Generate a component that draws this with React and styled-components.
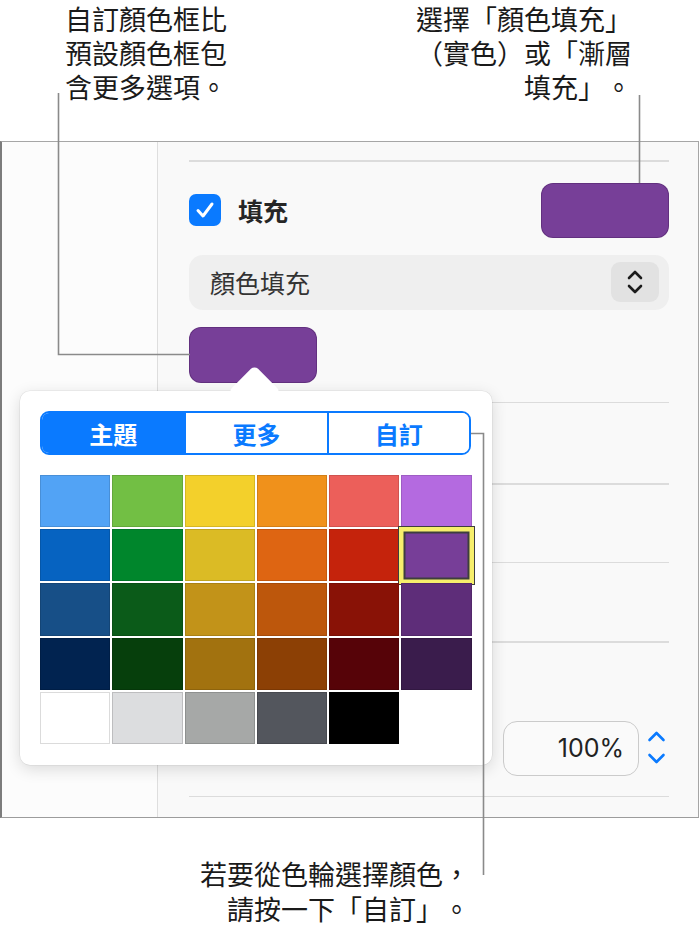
import React from 'react';
import styled, { createGlobalStyle } from 'styled-components';

const GlobalStyle = createGlobalStyle`
  * {
    box-sizing: border-box;
  }
  body {
    margin: 0;
    background: #ffffff;
    font-family: 'Noto Sans', 'Noto Sans CJK TC', sans-serif;
    color: #1a1a1a;
    text-spacing-trim: space-all;
  }
`;

const SWATCHES = [
  ['#52a3f5', '#72bf44', '#f3d02b', '#f0911b', '#ec5f5a', '#b46ae0'],
  ['#0663c1', '#00862c', '#dbbb25', '#de6512', '#c5230c', '#773e98'],
  ['#174f87', '#0b5b19', '#c29319', '#bd570c', '#891206', '#5e2d79'],
  ['#012350', '#063f0c', '#a2720f', '#8c4005', '#560308', '#3a1c4c'],
  ['#ffffff', '#dcdddf', '#a6a8a7', '#53565d', '#000000', null],
];

const Figure = styled.div`
  position: relative;
  width: 700px;
  height: 929px;
  overflow: hidden;
`;

const Header = styled.div`
  display: flex;
  justify-content: space-between;
  height: 141px;
`;

const Callout = styled.p`
  margin: 0;
  font-family: 'Noto Sans CJK TC', sans-serif;
  font-size: 27px;
  line-height: 34px;
  color: #1a1a1a;
  text-align: ${(p) => p.align || 'left'};
  text-spacing-trim: space-all;
`;

const LeftNote = styled(Callout)`
  padding: 2px 0 0 65px;
`;

const RightNote = styled(Callout)`
  padding: 2px 68px 0 0;
`;

const Panel = styled.div`
  display: grid;
  grid-template-columns: 156px 1fr;
  width: 699px;
  height: 677px;
  border-top: 1.5px solid #a6a6a6;
  border-left: 2px solid #7c7c7c;
  border-right: 1.5px solid #a6a6a6;
  border-bottom: 1.5px solid #9c9c9c;
  background: #f9f9f9;
`;

const Sidebar = styled.div`
  background: #fcfcfc;
  border-right: 1.5px solid #dedede;
`;

const Inspector = styled.div`
  display: flex;
  flex-direction: column;
  padding: 18px 29px 0 31px;
`;

const Rule = styled.div`
  height: 1.5px;
  background: #dcdcdc;
  margin-top: ${(p) => p.top || 0}px;
`;

const FillRow = styled.div`
  display: flex;
  align-items: center;
  justify-content: space-between;
  margin-top: 21px;
  height: 55px;
`;

const Label = styled.label`
  display: flex;
  align-items: center;
  gap: 17px;
  font-family: 'Noto Sans CJK TC', sans-serif;
  font-size: 25px;
  font-weight: 700;
  color: #262626;
`;

const Checkbox = styled.span`
  display: flex;
  align-items: center;
  justify-content: center;
  width: 32px;
  height: 32px;
  border-radius: 7px;
  background: #0a7aff;
`;

const ColorWell = styled.div`
  width: 128px;
  height: ${(p) => p.h || 55}px;
  border-radius: 12px;
  background: ${(p) => p.color};
  border: 1px solid rgba(60, 20, 80, 0.35);
`;

const Select = styled.div`
  display: flex;
  align-items: center;
  justify-content: space-between;
  margin-top: 17px;
  height: 55px;
  padding: 0 10px 0 21px;
  border-radius: 14px;
  background: #efefef;
  font-family: 'Noto Sans CJK TC', sans-serif;
  font-size: 25px;
  color: #333333;
`;

const StepBox = styled.span`
  display: flex;
  align-items: center;
  justify-content: center;
  width: 48px;
  height: 40px;
  border-radius: 9px;
  background: #e2e2e2;
`;

const WellRow = styled.div`
  display: flex;
  margin-top: 17px;
`;

const ValueRow = styled.div`
  display: flex;
  align-items: center;
  justify-content: flex-end;
  gap: 8px;
  margin-top: 78px;
  padding-right: 3px;
`;

const ValueField = styled.div`
  width: 136px;
  height: 55px;
  border: 1.5px solid #cbcbcb;
  border-radius: 14px;
  background: #fafafa;
  padding-right: 14px;
  text-align: right;
  font-family: 'Inter', 'Noto Sans', sans-serif;
  font-size: 25px;
  line-height: 52px;
  color: #222222;
`;

const Popover = styled.div`
  position: absolute;
  left: 20px;
  top: 391px;
  width: 472px;
  padding: 20px 20px 21px;
  background: #ffffff;
  border-radius: 10px;
  box-shadow: 0 0 0 0.5px rgba(0, 0, 0, 0.08), 0 4px 16px rgba(0, 0, 0, 0.14);
`;

const Arrow = styled.span`
  position: absolute;
  left: 216px;
  top: -18px;
  width: 37px;
  height: 37px;
  background: #ffffff;
  border-radius: 5px;
  transform: rotate(45deg);
`;

const Segmented = styled.div`
  position: relative;
  display: grid;
  grid-template-columns: repeat(3, 1fr);
  height: 44px;
  width: 431px;
  border: 2px solid #0a7aff;
  border-radius: 9px;
  overflow: hidden;
`;

const Segment = styled.div`
  display: flex;
  align-items: center;
  justify-content: center;
  font-family: 'Noto Sans CJK TC', sans-serif;
  font-size: 24px;
  font-weight: 700;
  color: ${(p) => (p.active ? '#ffffff' : '#0a7aff')};
  background: ${(p) => (p.active ? '#0a7aff' : '#ffffff')};
  & + & {
    border-left: 2px solid #0a7aff;
  }
`;

const Grid = styled.div`
  display: grid;
  grid-template-columns: repeat(6, 70.3px);
  grid-auto-rows: 52.2px;
  gap: 2px;
  margin-top: 20px;
`;

const Swatch = styled.div`
  position: relative;
  background: ${(p) => p.color};
  box-shadow: inset 0 0 0 1px ${(p) => (p.light ? 'rgba(0,0,0,0.14)' : 'rgba(0,0,0,0.12)')};

  ${(p) =>
    p.selected &&
    `
    &::after {
      content: '';
      position: absolute;
      inset: -3.5px;
      border: 1.5px solid #3e3e3e;
      box-shadow: inset 0 0 0 4.5px #f7ef6c, inset 0 0 0 6.5px #3e3e3e;
    }
  `}
`;

const Footer = styled(Callout)`
  margin-top: 38px;
  width: 470px;
  line-height: 35px;
`;

const Leaders = styled.svg`
  position: absolute;
  left: 0;
  top: 0;
  width: 700px;
  height: 929px;
  pointer-events: none;
`;

const Chevrons = ({ color, width, height, up, down, stroke }) => (
  <svg width={width} height={height} viewBox={`0 0 ${width} ${height}`}>
    <g fill="none" stroke={color} strokeWidth={stroke} strokeLinecap="round" strokeLinejoin="round">
      <polyline points={up} />
      <polyline points={down} />
    </g>
  </svg>
);

const App = () => {
  return (
    <Figure>
      <GlobalStyle />
      <Header>
        <LeftNote>
          自訂顏色框比
          <br />
          預設顏色框包
          <br />
          含更多選項。
        </LeftNote>
        <RightNote align="right">
          選擇「顏色填充」
          <br />
          （實色）或「漸層
          <br />
          填充」。
        </RightNote>
      </Header>

      <Panel>
        <Sidebar />
        <Inspector>
          <Rule />
          <FillRow>
            <Label>
              <Checkbox>
                <svg width="22" height="22" viewBox="0 0 22 22">
                  <polyline
                    points="4,11.5 9,17 18,5"
                    fill="none"
                    stroke="#fff"
                    strokeWidth="3"
                    strokeLinecap="round"
                    strokeLinejoin="round"
                  />
                </svg>
              </Checkbox>
              填充
            </Label>
            <ColorWell color="#773f98" />
          </FillRow>
          <Select>
            顏色填充
            <StepBox>
              <Chevrons
                color="#1c1c1c"
                width={18}
                height={26}
                stroke={2.6}
                up="3,9 9,3 15,9"
                down="3,17 9,23 15,17"
              />
            </StepBox>
          </Select>
          <WellRow>
            <ColorWell color="#773f98" h={56} />
          </WellRow>
          <Rule top={19} />
          <Rule top={80} />
          <Rule top={77} />
          <Rule top={78} />
          <ValueRow>
            <ValueField>100%</ValueField>
            <Chevrons
              color="#0a7aff"
              width={19}
              height={38}
              stroke={2.6}
              up="2.5,11 9.5,4 16.5,11"
              down="2.5,26 9.5,33 16.5,26"
            />
          </ValueRow>
          <Rule top={20} />
        </Inspector>
      </Panel>

      <Footer align="right">
        若要從色輪選擇顏色，
        <br />
        請按一下「自訂」。
      </Footer>

      <Popover>
        <Arrow />
        <Segmented>
          <Segment active>主題</Segment>
          <Segment>更多</Segment>
          <Segment>自訂</Segment>
        </Segmented>
        <Grid>
          {SWATCHES.flatMap((row, r) =>
            row.map((color, c) =>
              color ? (
                <Swatch
                  key={`${r}-${c}`}
                  color={color}
                  light={r === 4}
                  selected={r === 1 && c === 5}
                />
              ) : (
                <div key={`${r}-${c}`} />
              )
            )
          )}
        </Grid>
      </Popover>

      <Leaders viewBox="0 0 700 929">
        <g fill="none" stroke="#8a8a8a" strokeWidth="1.6">
          <path d="M58.5 93 V354.5 H190" />
          <path d="M639.5 95 V183" />
          <path d="M471 433.5 H483.5 V875" />
        </g>
      </Leaders>
    </Figure>
  );
};

export default App;
